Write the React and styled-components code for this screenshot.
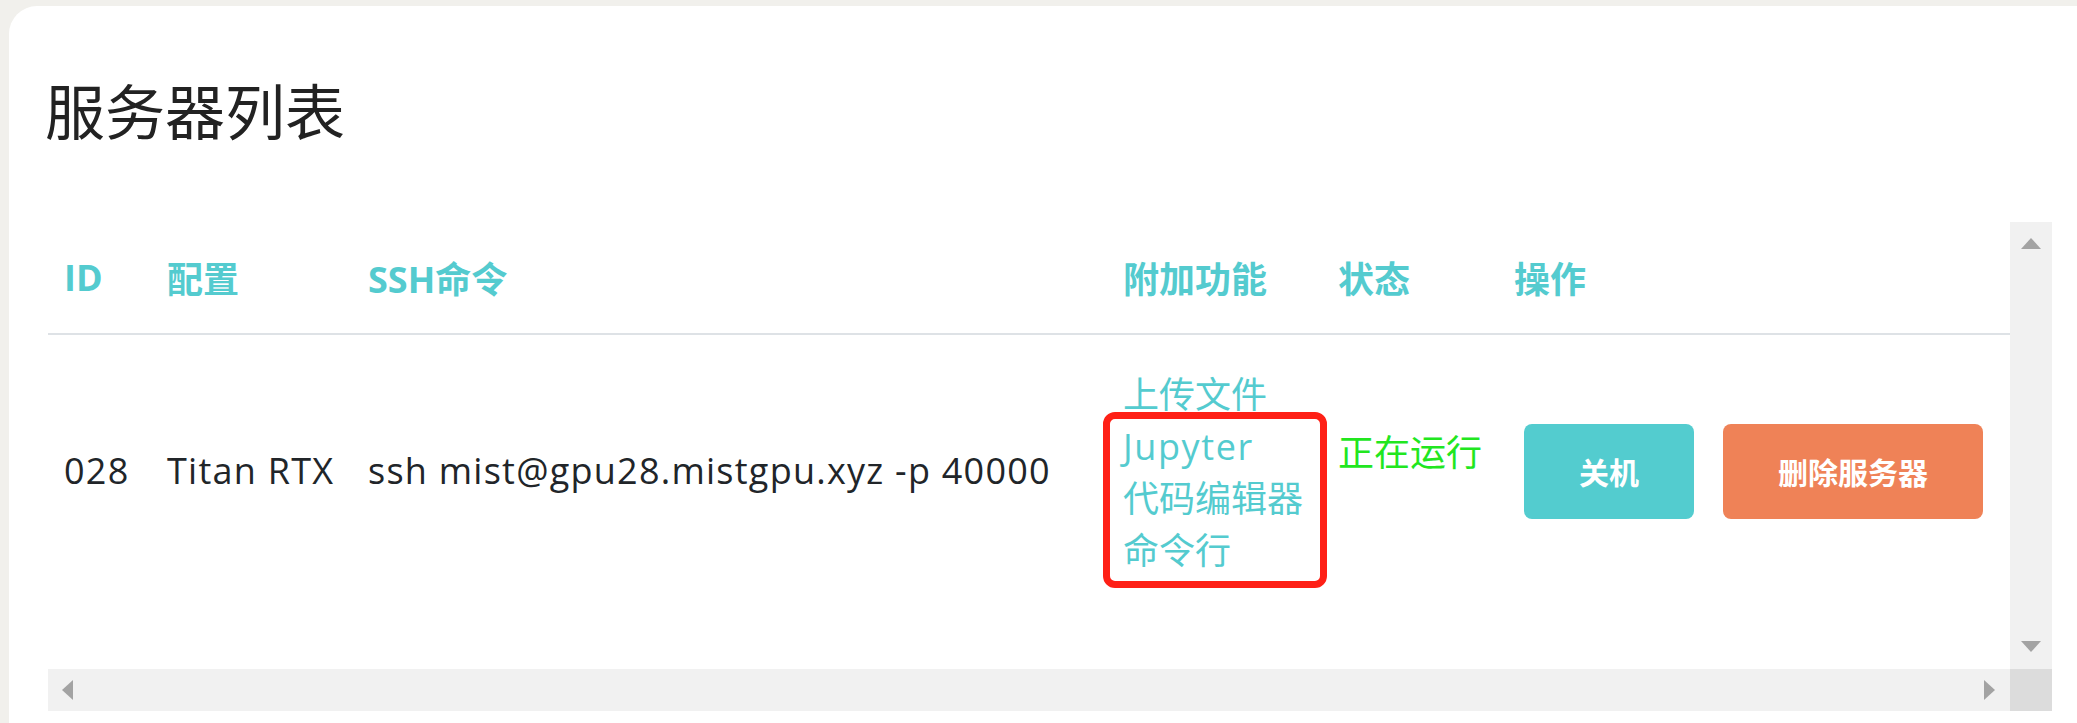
import React from 'react';
import styled, { createGlobalStyle } from 'styled-components';

const GlobalStyle = createGlobalStyle`
  html, body {
    margin: 0;
    padding: 0;
    overflow: hidden;
    background: #f1f0ec;
  }
  body {
    font-family: "Open Sans", "Noto Sans CJK SC", sans-serif;
    color: #212529;
  }
`;

const TEAL = '#54cbcf';

const Card = styled.div`
  margin: 6px 0 0 9px;
  width: 2100px;
  height: 760px;
  background: #fff;
  border-radius: 28px;
  padding: 67px 39px 0;
  box-sizing: border-box;
`;

const Title = styled.h1`
  margin: 0 0 0 -3px;
  font-family: "Noto Sans CJK SC", sans-serif;
  font-size: 60px;
  line-height: 72px;
  font-weight: 400;
  color: #222;
`;

const ScrollFrame = styled.div`
  margin-top: 77px;
  width: 2004px;
  display: grid;
  grid-template-columns: 1fr 42px;
  grid-template-rows: 447px 42px;
`;

const Viewport = styled.div`
  overflow: hidden;
`;

const columns = '103px 201px 755px 215px 176px 1fr';

const HeadRow = styled.div`
  display: grid;
  grid-template-columns: ${columns};
  align-items: center;
  height: 111px;
  border-bottom: 2px solid #dee2e6;
`;

const HeadCell = styled.div`
  padding-left: 16px;
  font-size: 36px;
  font-weight: 700;
  color: ${TEAL};
`;

const Row = styled.div`
  display: grid;
  grid-template-columns: ${columns};
  align-items: center;
  padding: 30px 0 28px;
`;

const Cell = styled.div`
  padding-left: 16px;
  font-size: 36px;
  line-height: 52px;
  white-space: nowrap;
  letter-spacing: ${(p) => (p.$wide ? '1.25px' : '0')};
`;

const FeatureCell = styled(Cell)`
  position: relative;
  display: flex;
  flex-direction: column;
  padding-top: 4px;
`;

const FeatureLink = styled.a`
  color: ${TEAL};
  text-decoration: none;
  cursor: pointer;
  letter-spacing: ${(p) => (p.$latin ? '1.6px' : '0')};
`;

const Highlight = styled.div`
  position: absolute;
  left: -4px;
  top: 47px;
  width: 224px;
  height: 176px;
  box-sizing: border-box;
  border: 7px solid #fe2016;
  border-radius: 12px;
  pointer-events: none;
`;

const Status = styled(Cell)`
  color: #22e61f;
  padding-bottom: 36px;
`;

const Actions = styled.div`
  display: flex;
  gap: 29px;
  padding-left: 26px;
`;

const Button = styled.button`
  height: 95px;
  padding: 0 55px;
  border: none;
  border-radius: 8px;
  background: ${(p) => p.$color};
  color: #fff;
  font-family: "Noto Sans CJK SC", sans-serif;
  font-size: 30px;
  font-weight: 700;
  cursor: pointer;
`;

const Track = styled.div`
  background: #f1f1f1;
  display: flex;
  flex-direction: ${(p) => (p.$vertical ? 'column' : 'row')};
  justify-content: space-between;
  align-items: center;
  padding: ${(p) => (p.$vertical ? '16px 0 17px' : '0 15px 0 14px')};
`;

const Corner = styled.div`
  background: #dcdcdc;
`;

const Arrow = ({ dir }) => {
  const pts = {
    up: '0,11 20,11 10,0',
    down: '0,0 20,0 10,11',
    left: '11,0 11,20 0,10',
    right: '0,0 0,20 11,10',
  }[dir];
  const vertical = dir === 'up' || dir === 'down';
  return (
    <svg width={vertical ? 20 : 11} height={vertical ? 11 : 20}>
      <polygon points={pts} fill="#a3a3a3" />
    </svg>
  );
};

const App = () => {
  return (
    <>
      <GlobalStyle />
      <Card>
        <Title>服务器列表</Title>
        <ScrollFrame>
          <Viewport>
            <HeadRow>
              <HeadCell>ID</HeadCell>
              <HeadCell>配置</HeadCell>
              <HeadCell>SSH命令</HeadCell>
              <HeadCell>附加功能</HeadCell>
              <HeadCell>状态</HeadCell>
              <HeadCell>操作</HeadCell>
            </HeadRow>
            <Row>
              <Cell $wide>028</Cell>
              <Cell $wide>Titan RTX</Cell>
              <Cell $wide>ssh mist@gpu28.mistgpu.xyz -p 40000</Cell>
              <FeatureCell>
                <FeatureLink>上传文件</FeatureLink>
                <FeatureLink $latin>Jupyter</FeatureLink>
                <FeatureLink>代码编辑器</FeatureLink>
                <FeatureLink>命令行</FeatureLink>
                <Highlight />
              </FeatureCell>
              <Status>正在运行</Status>
              <Actions>
                <Button $color="#53cccf">关机</Button>
                <Button $color="#ef8257">删除服务器</Button>
              </Actions>
            </Row>
          </Viewport>
          <Track $vertical>
            <Arrow dir="up" />
            <Arrow dir="down" />
          </Track>
          <Track>
            <Arrow dir="left" />
            <Arrow dir="right" />
          </Track>
          <Corner />
        </ScrollFrame>
      </Card>
    </>
  );
};

export default App;
